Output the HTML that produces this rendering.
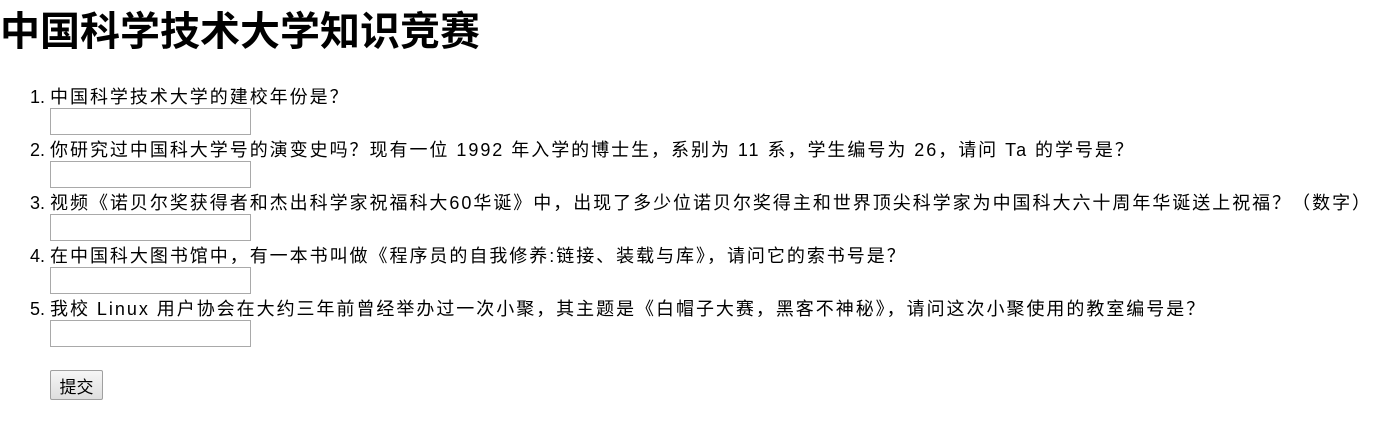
<!DOCTYPE html>
<html><head><meta charset="utf-8"><style>
body{margin:0;background:#fff;color:#000;font-family:"Liberation Sans","Noto Sans CJK SC",sans-serif;}
h1{margin:0;font-size:40px;line-height:64px;font-weight:bold;}
ol{margin:21px 0 0 0;padding-left:50px;font-size:18px;}
li{height:53px;}
li div{line-height:23px;height:23px;white-space:nowrap;padding-top:1px;margin-bottom:-1px;letter-spacing:1.97px;}
input{display:block;box-sizing:border-box;width:201px;height:27px;margin:0;border:1px solid #a9a9a9;}
button{position:absolute;left:50px;top:370px;width:53px;height:30px;font-size:17px;font-family:"Liberation Sans","Noto Sans CJK SC",sans-serif;background:linear-gradient(#f6f6f6,#dedede);border:1px solid #a0a0a0;border-radius:2px;padding:0;}
</style></head><body>
<h1>中国科学技术大学知识竞赛</h1>
<ol>
<li><div>中国科学技术大学的建校年份是？</div><input></li>
<li><div>你研究过中国科大学号的演变史吗？现有一位 1992 年入学的博士生，系别为 11 系，学生编号为 26，请问 Ta 的学号是？</div><input></li>
<li><div>视频《诺贝尔奖获得者和杰出科学家祝福科大60华诞》中，出现了多少位诺贝尔奖得主和世界顶尖科学家为中国科大六十周年华诞送上祝福？（数字）</div><input></li>
<li><div>在中国科大图书馆中，有一本书叫做《程序员的自我修养:链接、装载与库》，请问它的索书号是？</div><input></li>
<li><div>我校 Linux 用户协会在大约三年前曾经举办过一次小聚，其主题是《白帽子大赛，黑客不神秘》，请问这次小聚使用的教室编号是？</div><input></li>
</ol>
<button>提交</button>
</body></html>
